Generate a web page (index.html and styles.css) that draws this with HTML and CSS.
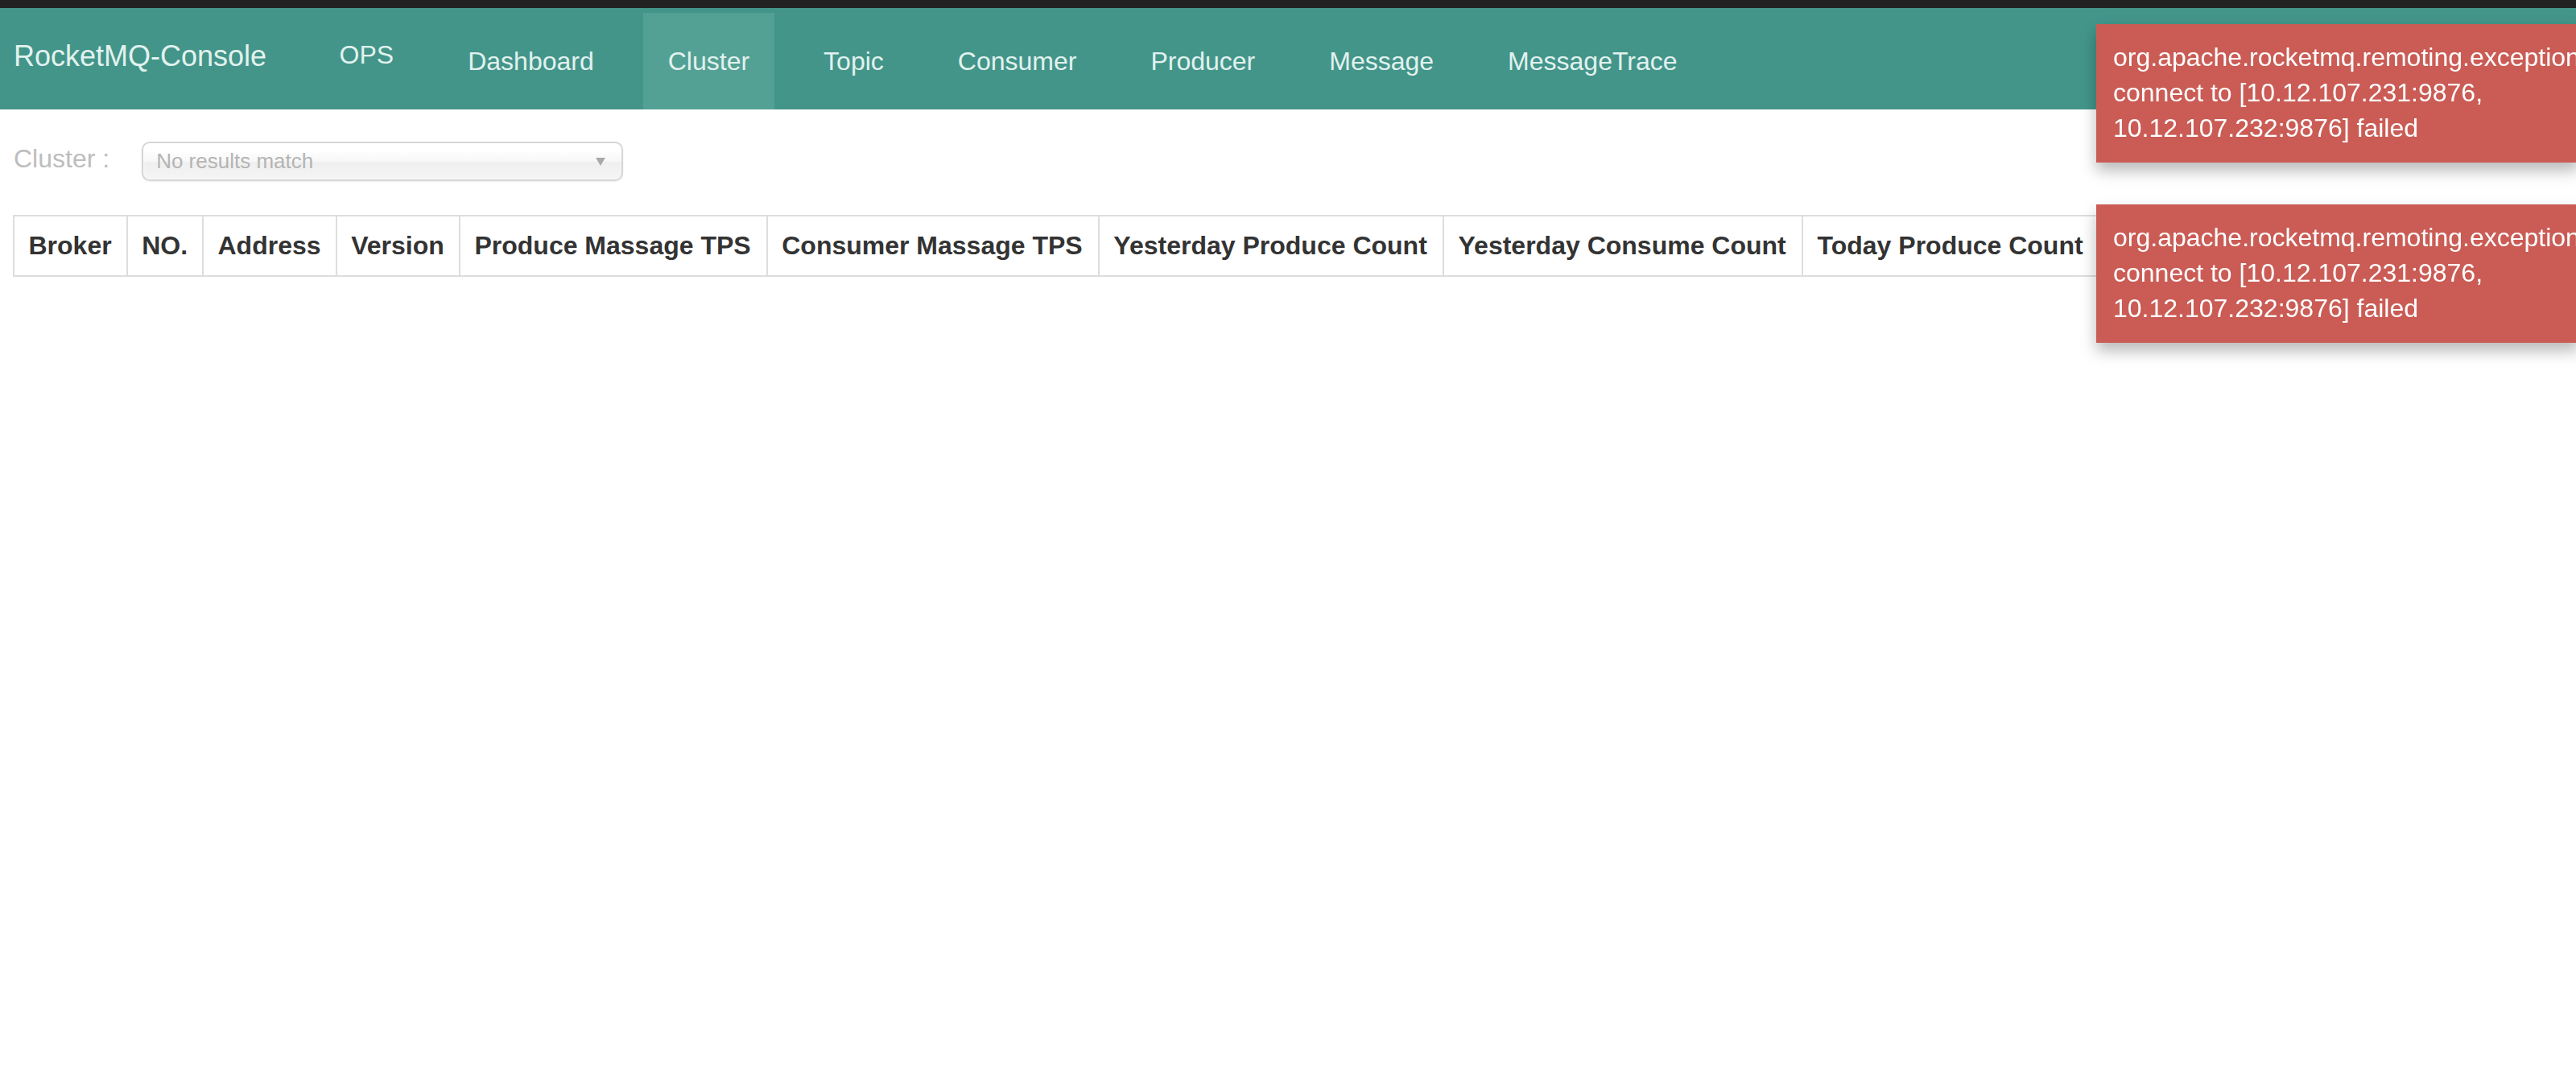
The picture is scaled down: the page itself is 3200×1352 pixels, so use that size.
FILE: index.html
```html
<!DOCTYPE html>
<html lang="en">
<head>
<meta charset="utf-8">
<title>RocketMQ-Console</title>
<link rel="stylesheet" href="styles.css">
</head>
<body>
<div class="topbar"></div>
<nav class="navbar">
  <a class="brand" href="#">RocketMQ-Console</a>
  <ul class="nav">
    <li class="nav-item ops"><a href="#">OPS</a></li>
    <li class="nav-item"><a href="#">Dashboard</a></li>
    <li class="nav-item active"><a href="#">Cluster</a></li>
    <li class="nav-item"><a href="#">Topic</a></li>
    <li class="nav-item"><a href="#">Consumer</a></li>
    <li class="nav-item"><a href="#">Producer</a></li>
    <li class="nav-item"><a href="#">Message</a></li>
    <li class="nav-item"><a href="#">MessageTrace</a></li>
  </ul>
</nav>
<main class="content">
  <div class="filter">
    <label class="filter-label">Cluster :</label>
    <div class="chosen">
      <span class="chosen-text">No results match</span>
      <span class="chosen-arrow"></span>
    </div>
  </div>
  <div class="table-wrap">
    <table class="grid">
      <thead>
        <tr>
          <th>Broker</th>
          <th>NO.</th>
          <th>Address</th>
          <th>Version</th>
          <th>Produce Massage TPS</th>
          <th>Consumer Massage TPS</th>
          <th>Yesterday Produce Count</th>
          <th>Yesterday Consume Count</th>
          <th>Today Produce Count</th>
          <th>Today Consume Count</th>
          <th>Operation</th>
        </tr>
      </thead>
      <tbody></tbody>
    </table>
  </div>
</main>
<div class="toasts">
  <div class="toast">org.apache.rocketmq.remoting.exception.RemotingConnectException: connect to [10.12.107.231:9876, 10.12.107.232:9876] failed</div>
  <div class="toast">org.apache.rocketmq.remoting.exception.RemotingConnectException: connect to [10.12.107.231:9876, 10.12.107.232:9876] failed</div>
</div>
</body>
</html>
```

FILE: styles.css
```css
html, body {
  margin: 0;
  padding: 0;
  background: #fff;
  overflow: hidden;
}
body {
  font-family: "Liberation Sans", Arial, Helvetica, sans-serif;
  color: #333;
}
.topbar {
  height: 10px;
  background: #222222;
}
.navbar {
  height: 126px;
  background: #43958a;
  display: flex;
  align-items: flex-start;
}
.brand {
  padding-left: 17px;
  font-size: 36px;
  line-height: 120px;
  color: #e2f2ee;
  text-decoration: none;
  white-space: nowrap;
}
.nav {
  list-style: none;
  margin: 6px 0 0 60px;
  padding: 0;
  display: flex;
  gap: 31px;
  height: 120px;
}
.nav-item a {
  display: block;
  padding: 0 30.5px;
  font-size: 32px;
  line-height: 120px;
  color: #e2f2ee;
  text-decoration: none;
  white-space: nowrap;
}
.nav-item.ops a {
  line-height: 104px;
}
.nav-item.active a {
  background: #53a095;
}
.content {
  padding: 0 16px;
}
.filter {
  display: flex;
  align-items: center;
  margin-top: 40px;
}
.filter-label {
  padding-left: 1px;
  padding-bottom: 6px;
  font-size: 32px;
  color: #bdbdbd;
  white-space: nowrap;
}
.chosen {
  box-sizing: border-box;
  margin-left: 40px;
  width: 598px;
  height: 49px;
  border: 2px solid #d6d6d6;
  border-radius: 10px;
  background: linear-gradient(#ffffff 20%, #f7f7f7 50%, #efefef 52%, #f5f5f5 100%);
  box-shadow: inset 0 0 3px #fff, 0 1px 2px rgba(0, 0, 0, 0.08);
  display: flex;
  align-items: center;
  justify-content: space-between;
  padding: 0 20px 0 16px;
}
.chosen-text {
  font-size: 26px;
  color: #b4b4b4;
  white-space: nowrap;
}
.chosen-arrow {
  width: 0;
  height: 0;
  border-left: 6px solid transparent;
  border-right: 6px solid transparent;
  border-top: 10px solid #a9a9a9;
}
.table-wrap {
  margin-top: 42px;
  overflow: hidden;
}
.grid {
  border-collapse: collapse;
  border: 2px solid #dddddd;
  width: 100%;
}
.grid th {
  border: 2px solid #dddddd;
  padding: 14px 17.5px;
  font-size: 32px;
  line-height: 45px;
  font-weight: bold;
  color: #333333;
  text-align: left;
  white-space: nowrap;
}
.toasts {
  position: fixed;
  top: 30px;
  left: 2604px;
  width: 600px;
}
.toast {
  box-sizing: border-box;
  width: 600px;
  height: 172px;
  margin-bottom: 52px;
  padding: 19px 20px 0 21px;
  background: #ca5c55;
  color: #ffffff;
  font-size: 32px;
  line-height: 44px;
  box-shadow: 0 10px 18px rgba(0, 0, 0, 0.28);
}
```
